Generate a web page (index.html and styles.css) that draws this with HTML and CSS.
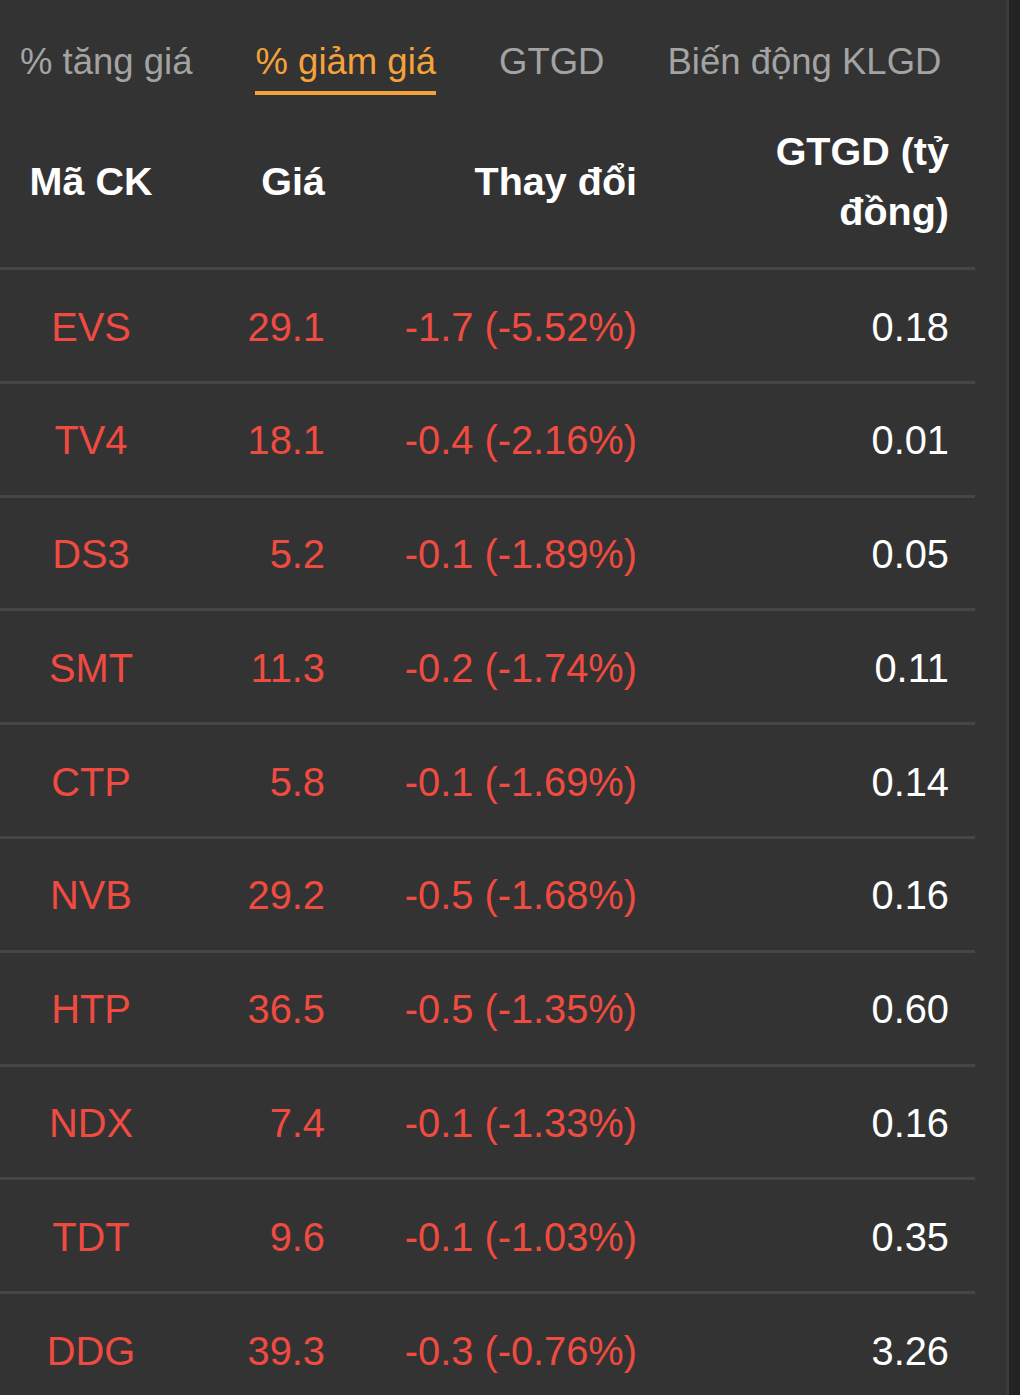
FILE: index.html
```html
<!DOCTYPE html>
<html lang="vi">
<head>
    <meta charset="UTF-8">
    <title>Top giảm giá</title>
    <link rel="stylesheet" href="styles.css">
</head>
<body>
    <div class="panel">
        <nav class="tabs">
            <a class="tab" href="#">% tăng giá</a>
            <a class="tab active" href="#">% giảm giá</a>
            <a class="tab" href="#">GTGD</a>
            <a class="tab" href="#">Biến động KLGD</a>
        </nav>

        <table class="stock-table">
            <colgroup>
                <col class="col-code">
                <col class="col-price">
                <col class="col-change">
                <col class="col-value">
            </colgroup>
            <thead>
                <tr>
                    <th class="code">Mã CK</th>
                    <th>Giá</th>
                    <th>Thay đổi</th>
                    <th>GTGD (tỷ đồng)</th>
                </tr>
            </thead>
            <tbody>
                <tr><td class="code down">EVS</td><td class="down">29.1</td><td class="down">-1.7 (-5.52%)</td><td class="value">0.18</td></tr>
                <tr><td class="code down">TV4</td><td class="down">18.1</td><td class="down">-0.4 (-2.16%)</td><td class="value">0.01</td></tr>
                <tr><td class="code down">DS3</td><td class="down">5.2</td><td class="down">-0.1 (-1.89%)</td><td class="value">0.05</td></tr>
                <tr><td class="code down">SMT</td><td class="down">11.3</td><td class="down">-0.2 (-1.74%)</td><td class="value">0.11</td></tr>
                <tr><td class="code down">CTP</td><td class="down">5.8</td><td class="down">-0.1 (-1.69%)</td><td class="value">0.14</td></tr>
                <tr><td class="code down">NVB</td><td class="down">29.2</td><td class="down">-0.5 (-1.68%)</td><td class="value">0.16</td></tr>
                <tr><td class="code down">HTP</td><td class="down">36.5</td><td class="down">-0.5 (-1.35%)</td><td class="value">0.60</td></tr>
                <tr><td class="code down">NDX</td><td class="down">7.4</td><td class="down">-0.1 (-1.33%)</td><td class="value">0.16</td></tr>
                <tr><td class="code down">TDT</td><td class="down">9.6</td><td class="down">-0.1 (-1.03%)</td><td class="value">0.35</td></tr>
                <tr><td class="code down">DDG</td><td class="down">39.3</td><td class="down">-0.3 (-0.76%)</td><td class="value">3.26</td></tr>
            </tbody>
        </table>
    </div>
</body>
</html>
```
FILE: styles.css
```css
body {
    margin: 0;
    padding: 0;
    background-color: #232323;
    font-family: 'Liberation Sans', Helvetica, Arial, sans-serif;
    overflow: hidden;
}

.panel {
    width: 1006px;
    min-height: 1395px;
    background-color: #333333;
    border-right: 3px solid #3b3b3b;
}

.tabs {
    display: flex;
    gap: 63px;
    padding: 41px 0 0 20px;
}

.tab {
    color: #a3a3a3;
    text-decoration: none;
    font-size: 36.5px;
    line-height: 42px;
    padding-bottom: 8px;
    border-bottom: 4px solid transparent;
}

.tab.active {
    color: #f5a23a;
    border-bottom-color: #f5a23a;
}

.stock-table {
    width: 975px;
    border-collapse: collapse;
    table-layout: fixed;
}

.col-code { width: 182px; }
.col-price { width: 169px; }
.col-change { width: 312px; }
.col-value { width: 312px; }

.stock-table th {
    color: #ffffff;
    font-size: 39.5px;
    font-weight: bold;
    line-height: 60px;
    padding: 26px 26px 26px 0;
    text-align: right;
    border-bottom: 3px solid #464646;
}

.stock-table td {
    font-size: 39.8px;
    line-height: 58.5px;
    padding: 27.5px 26px 24.8px 0;
    text-align: right;
    border-bottom: 3px solid #464646;
}

.stock-table .code {
    text-align: center;
    padding-right: 0;
}

.down {
    color: #f04b40;
}

.value {
    color: #ffffff;
}
```
